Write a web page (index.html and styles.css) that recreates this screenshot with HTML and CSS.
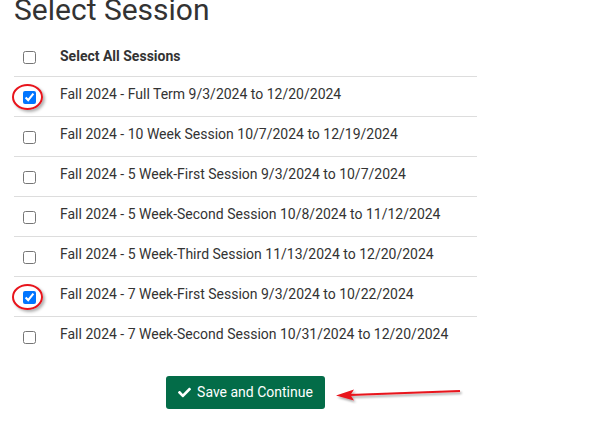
FILE: index.html
```html
<!DOCTYPE html>
<html lang="en">
<head>
    <meta charset="UTF-8">
    <title>Select Session</title>
    <link rel="stylesheet" href="styles.css">
</head>
<body>
    <div class="page">
        <h2 class="title">Select Session</h2>

        <table class="sessions">
            <thead>
                <tr>
                    <th class="check"><input type="checkbox"></th>
                    <th>Select All Sessions</th>
                </tr>
            </thead>
            <tbody>
                <tr>
                    <td class="check"><input type="checkbox" checked><span class="mark"></span></td>
                    <td>Fall 2024 - Full Term 9/3/2024 to 12/20/2024</td>
                </tr>
                <tr>
                    <td class="check"><input type="checkbox"></td>
                    <td>Fall 2024 - 10 Week Session 10/7/2024 to 12/19/2024</td>
                </tr>
                <tr>
                    <td class="check"><input type="checkbox"></td>
                    <td>Fall 2024 - 5 Week-First Session 9/3/2024 to 10/7/2024</td>
                </tr>
                <tr>
                    <td class="check"><input type="checkbox"></td>
                    <td>Fall 2024 - 5 Week-Second Session 10/8/2024 to 11/12/2024</td>
                </tr>
                <tr>
                    <td class="check"><input type="checkbox"></td>
                    <td>Fall 2024 - 5 Week-Third Session 11/13/2024 to 12/20/2024</td>
                </tr>
                <tr>
                    <td class="check"><input type="checkbox" checked><span class="mark"></span></td>
                    <td>Fall 2024 - 7 Week-First Session 9/3/2024 to 10/22/2024</td>
                </tr>
                <tr>
                    <td class="check"><input type="checkbox"></td>
                    <td>Fall 2024 - 7 Week-Second Session 10/31/2024 to 12/20/2024</td>
                </tr>
            </tbody>
        </table>

        <div class="actions">
            <button class="save-button">
                <svg class="icon" viewBox="0 0 512 512" width="13" height="13">
                    <path fill="#fff" d="M173.9 439.4 7.5 273c-10-10-10-26.2 0-36.2l36.2-36.2c10-10 26.2-10 36.2 0L192 312.7 432.1 72.6c10-10 26.2-10 36.2 0l36.2 36.2c10 10 10 26.2 0 36.2L210.1 439.4c-10 10-26.2 10-36.2 0z"/>
                </svg>
                Save and Continue
            </button>
            <!-- red arrow from the screenshot annotation -->
            <svg class="arrow" viewBox="0 0 130 20" width="130" height="20">
                <g filter="url(#shadow)">
                    <path d="M15 11 L125 7" stroke="#e8141c" stroke-width="2.2" fill="none"/>
                    <path d="M1 11.5 L19 5.5 L15.5 11 L19 16.5 Z" fill="#e8141c"/>
                </g>
                <defs>
                    <filter id="shadow" x="-10%" y="-50%" width="120%" height="250%">
                        <feDropShadow dx="1.5" dy="2" stdDeviation="1.2" flood-color="#000" flood-opacity="0.35"/>
                    </filter>
                </defs>
            </svg>
        </div>
    </div>
</body>
</html>
```

FILE: styles.css
```css
* {
    box-sizing: border-box;
}

body {
    margin: 0;
    font-family: Roboto, 'Liberation Sans', sans-serif;
    color: #333;
    background: #fff;
}

.page {
    width: 477px;
    padding-left: 14px;
}

.title {
    font-size: 30px;
    font-weight: 400;
    line-height: 36px;
    margin: -8px 0 8px;
    color: #333;
}

.sessions {
    width: 100%;
    border-collapse: collapse;
    font-size: 14px;
}

.sessions th,
.sessions td {
    height: 40px;
    padding: 0;
    text-align: left;
    vertical-align: middle;
}

.sessions th {
    font-weight: 700;
}

.sessions tbody tr {
    border-top: 1px solid #ddd;
}

.sessions tbody td:last-child {
    padding-bottom: 5px;
}

.check {
    width: 46px;
    position: relative;
}

.check input {
    margin: 0 0 0 9px;
    width: 13px;
    height: 13px;
    vertical-align: middle;
}

/* red circle annotation around checked boxes */
.mark {
    position: absolute;
    left: -2px;
    top: 7px;
    width: 31px;
    height: 26px;
    border: 2px solid #e8141c;
    border-radius: 50%;
    box-shadow: 2px 2px 3px rgba(0, 0, 0, 0.3);
}

.actions {
    position: relative;
    display: flex;
    justify-content: center;
    margin-top: 20px;
}

.save-button {
    display: flex;
    align-items: center;
    gap: 6px;
    background: #036c48;
    color: #fff;
    border: none;
    border-radius: 3px;
    padding: 6px 12px;
    font-family: Roboto, 'Liberation Sans', sans-serif;
    font-size: 14px;
    line-height: 21px;
    cursor: pointer;
}

.arrow {
    position: absolute;
    left: 321px;
    top: 8px;
}
```
